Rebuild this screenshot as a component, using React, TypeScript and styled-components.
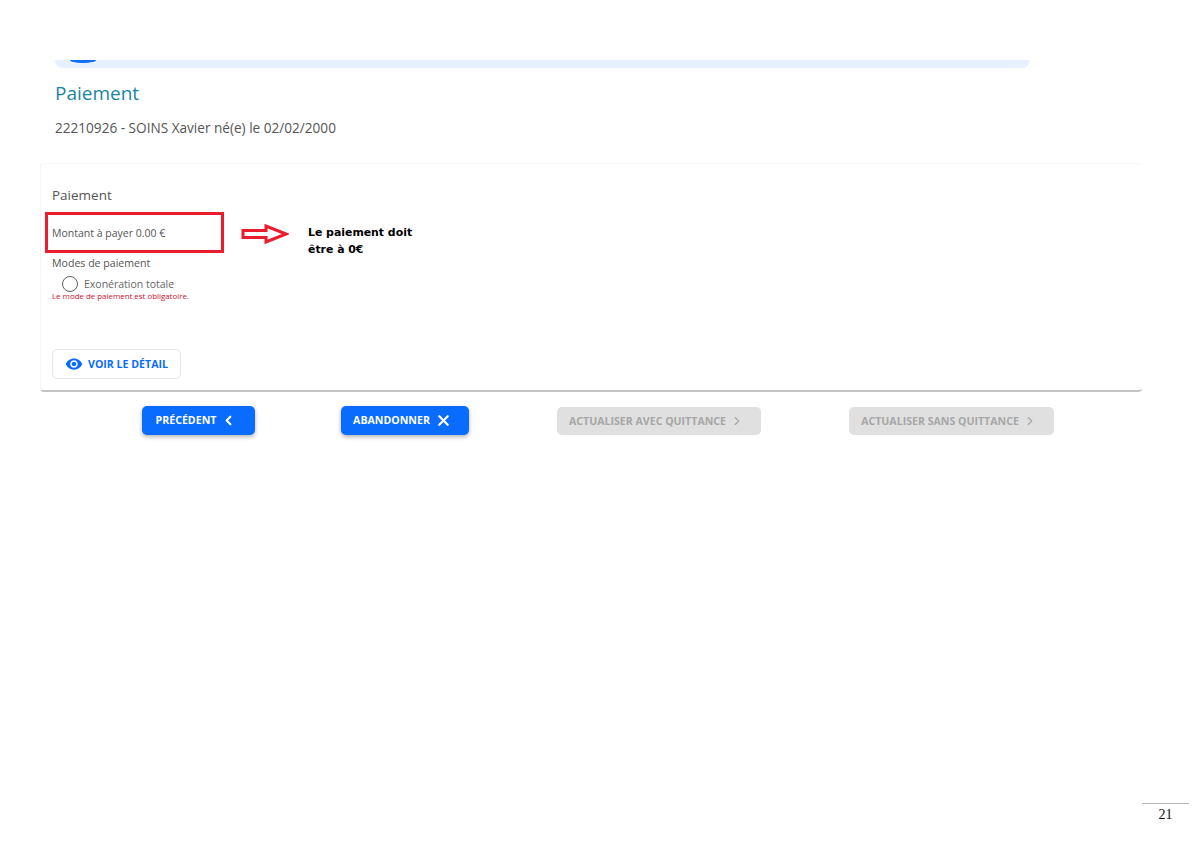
import React from 'react'
import styled, { createGlobalStyle } from 'styled-components'
import { ChevronLeft, ChevronRight, X } from 'lucide-react'
import { MdVisibility } from 'react-icons/md'

const GlobalStyle = createGlobalStyle`
  html, body {
    margin: 0;
    padding: 0;
    background: #fff;
  }
  body {
    font-family: "Open Sans", "Liberation Sans", sans-serif;
  }
`

const Page = styled.div`
  width: 1200px;
  height: 848px;
  box-sizing: border-box;
  padding-top: 60px;
  display: flex;
  flex-direction: column;
  overflow: hidden;
`

const Header = styled.header`
  width: 975px;
  margin-left: 55px;
`

const Banner = styled.div`
  height: 8px;
  background: #e6f0fe;
  border-radius: 0 0 8px 8px;
  padding-left: 15px;
`

const BannerPill = styled.div`
  width: 26px;
  height: 3px;
  background: #0a6cff;
  border-radius: 0 0 13px 13px / 0 0 3px 3px;
`

const Title = styled.h1`
  margin: 12px 0 0;
  font-size: 19px;
  line-height: 26px;
  font-weight: 400;
  color: #1b84a3;
`

const Subtitle = styled.p`
  margin: 12px 0 0;
  font-size: 13.6px;
  line-height: 20px;
  color: #555;
`

const Card = styled.section`
  position: relative;
  width: 1102px;
  height: 229px;
  box-sizing: border-box;
  margin: 25px 0 0 40px;
  padding: 22px 11px 0;
  background: #fff;
  border-top: 1px solid #f8f8f8;
  border-left: 1px solid #f4f4f4;
  border-bottom: 2px solid #c4c4c4;
  border-radius: 4px;
  display: flex;
  flex-direction: column;
`

const CardTitle = styled.h2`
  margin: 0;
  font-size: 13.5px;
  line-height: 19px;
  font-weight: 400;
  color: #555;
`

const Amount = styled.div`
  margin-top: 20px;
  font-size: 10.5px;
  line-height: 16px;
  color: #555;
`

const ModesLabel = styled.div`
  margin-top: 14px;
  font-size: 10.6px;
  line-height: 16px;
  color: #555;
`

const RadioRow = styled.label`
  display: flex;
  align-items: center;
  gap: 6px;
  margin: 5px 0 0 10px;
  font-size: 10.5px;
  line-height: 16px;
  color: #666;
`

const RadioCircle = styled.span`
  width: 16px;
  height: 16px;
  box-sizing: border-box;
  border: 1.5px solid #5f5f5f;
  border-radius: 50%;
`

const ErrorText = styled.div`
  margin-top: -1px;
  font-size: 7.9px;
  line-height: 10px;
  color: #d0112b;
`

const DetailButton = styled.button`
  display: flex;
  align-items: center;
  gap: 5px;
  width: 129px;
  height: 30px;
  box-sizing: border-box;
  margin-top: auto;
  margin-bottom: 11px;
  padding: 0 0 0 12px;
  background: #fff;
  border: 1px solid #e4e6ee;
  border-radius: 5px;
  font-family: inherit;
  font-size: 10.6px;
  font-weight: 700;
  color: #0a6cff;
`

const HighlightBox = styled.div`
  position: absolute;
  left: 4px;
  top: 48px;
  width: 179px;
  height: 41px;
  box-sizing: border-box;
  border: 3.5px solid #ea1c2d;
`

const Arrow = styled.svg`
  position: absolute;
  left: 200px;
  top: 60px;
`

const Note = styled.div`
  position: absolute;
  left: 267px;
  top: 60px;
  font-family: "DejaVu Sans", Verdana, sans-serif;
  font-size: 10.9px;
  font-weight: 700;
  line-height: 17px;
  color: #000;
`

const Actions = styled.div`
  display: flex;
  align-items: flex-start;
  gap: 86px;
  margin: 14px 0 0 142px;
`

const ActionButton = styled.button<{ $width: number; $disabled?: boolean }>`
  display: flex;
  align-items: center;
  justify-content: center;
  gap: ${p => (p.$disabled ? 4 : 5)}px;
  width: ${p => p.$width}px;
  height: ${p => (p.$disabled ? 28 : 29)}px;
  margin-top: ${p => (p.$disabled ? 1 : 0)}px;
  margin-left: ${p => (p.$disabled ? 2 : 0)}px;
  padding: 0 5px ${p => (p.$disabled ? 0 : 1)}px 0;
  border: none;
  border-radius: 5px;
  font-family: inherit;
  font-size: 10.6px;
  font-weight: 700;
  background: ${p => (p.$disabled ? '#e0e0e0' : '#0a6cff')};
  color: ${p => (p.$disabled ? '#a6a6a6' : '#fff')};
  box-shadow: ${p => (p.$disabled ? 'none' : '0 2px 4px rgba(0, 0, 0, 0.3)')};
`

const Footer = styled.footer`
  margin: auto 11px 0 auto;
  width: 47px;
  height: 44px;
  border-top: 1px solid #b5b5b5;
  font-family: "Liberation Serif", "Times New Roman", serif;
  font-size: 14px;
  line-height: 22px;
  text-align: center;
  color: #111;
`

export default function App() {
  return (
    <>
      <GlobalStyle />
      <Page>
        <Header>
          <Banner>
            <BannerPill />
          </Banner>
          <Title>Paiement</Title>
          <Subtitle>22210926 - SOINS Xavier né(e) le 02/02/2000</Subtitle>
        </Header>
        <Card>
          <CardTitle>Paiement</CardTitle>
          <Amount>Montant à payer 0.00 €</Amount>
          <ModesLabel>Modes de paiement</ModesLabel>
          <RadioRow>
            <RadioCircle />
            Exonération totale
          </RadioRow>
          <ErrorText>Le mode de paiement est obligatoire.</ErrorText>
          <DetailButton>
            <MdVisibility size={18} />
            VOIR LE DÉTAIL
          </DetailButton>
          <HighlightBox />
          <Arrow width="48" height="20" viewBox="0 0 48 20">
            <path
              d="M2 6.5H25V2L45 10 25 18V13.5H2Z"
              fill="#fff"
              stroke="#ea1c2d"
              strokeWidth="3"
            />
          </Arrow>
          <Note>
            Le paiement doit
            <br />
            être à 0€
          </Note>
        </Card>
        <Actions>
          <ActionButton $width={113}>
            PRÉCÉDENT <ChevronLeft size={15} strokeWidth={3.4} />
          </ActionButton>
          <ActionButton $width={128}>
            ABANDONNER <X size={17} strokeWidth={3} />
          </ActionButton>
          <ActionButton $width={204} $disabled>
            ACTUALISER AVEC QUITTANCE <ChevronRight size={14} strokeWidth={2} />
          </ActionButton>
          <ActionButton $width={205} $disabled>
            ACTUALISER SANS QUITTANCE <ChevronRight size={14} strokeWidth={2} />
          </ActionButton>
        </Actions>
        <Footer>21</Footer>
      </Page>
    </>
  )
}
